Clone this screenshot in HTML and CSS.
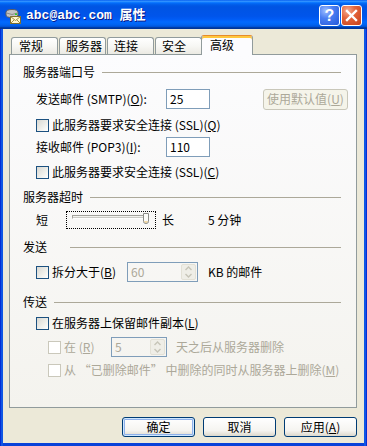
FILE: index.html
```html
<!DOCTYPE html>
<html lang="zh-CN">
<head>
<meta charset="utf-8">
<title>abc@abc.com 属性</title>
<link rel="stylesheet" href="styles.css">
</head>
<body>
<div class="window">
  <div class="titlebar">
    <svg class="app-icon" width="16" height="16" viewBox="0 0 16 16">
      <path d="M1 4.5 Q1 1.5 7 1.5 Q13 1.5 13 4.5 L13 7 Q13 9.5 7 9.5 Q1 9.5 1 7 Z" fill="#C4C4C4" stroke="#5E5E5E"/>
      <path d="M1.5 5 Q7 8 12.5 5" fill="none" stroke="#8A8A8A"/>
      <rect x="10" y="5.5" width="2" height="1.5" fill="#27D127"/>
      <rect x="5.5" y="8.5" width="10" height="7" fill="#FFF7CF" stroke="#7E6F2E"/>
      <path d="M5.5 8.5 L10.5 12.5 L15.5 8.5 M5.5 15.5 L9 12 M15.5 15.5 L12 12" fill="none" stroke="#9C8C45"/>
    </svg>
    <span class="title">abc@abc.com 属性</span>
    <div class="caption-btns">
      <div class="cap help">?</div>
      <div class="cap close">
        <svg width="19" height="19" viewBox="0 0 19 19"><path d="M5 5 L14 14 M14 5 L5 14" stroke="#fff" stroke-width="2.4" stroke-linecap="square"/></svg>
      </div>
    </div>
  </div>
  <div class="frame">
    <div class="client">
      <div class="tabs">
        <div class="tab first">常规</div>
        <div class="tab">服务器</div>
        <div class="tab">连接</div>
        <div class="tab">安全</div>
        <div class="tab active">高级</div>
      </div>
      <div class="panel">
        <div class="group-head top">
          <span>服务器端口号</span><i class="rule"></i>
        </div>
        <div class="row m7">
          <span class="field-label">发送邮件 (SMTP)(<u>O</u>):</span>
          <span class="edit">25</span>
          <span class="btn-disabled">使用默认值(<u>U</u>)</span>
        </div>
        <div class="row m6">
          <span class="check"></span><span>此服务器要求安全连接 (SSL)(<u>Q</u>)</span>
        </div>
        <div class="row m2">
          <span class="field-label">接收邮件 (POP3)(<u>I</u>):</span>
          <span class="edit">110</span>
        </div>
        <div class="row m5">
          <span class="check"></span><span>此服务器要求安全连接 (SSL)(<u>C</u>)</span>
        </div>

        <div class="group-head m5">
          <span>服务器超时</span><i class="rule"></i>
        </div>
        <div class="row m3">
          <span class="slider-label">短</span>
          <span class="slider">
            <svg width="88" height="16" viewBox="0 0 88 16">
              <rect x="5.5" y="3.5" width="75" height="2.5" fill="#F2F2EE" stroke="#A3A29C" stroke-width="1"/>
              <line x1="6" y1="6.5" x2="80" y2="6.5" stroke="#FFFFFF"/>
              <path d="M76.5 1.5 H81.5 V9.5 Q81.5 11.5 79 11.5 Q76.5 11.5 76.5 9.5 Z" fill="#FBFBF8" stroke="#8C8D88"/>
              <path d="M77.5 9.5 Q79 11 80.5 9.5" fill="none" stroke="#E8B85A"/>
            </svg>
          </span>
          <span class="slider-long">长</span>
          <span>5 分钟</span>
        </div>

        <div class="group-head m7">
          <span>发送</span><i class="rule wide"></i>
        </div>
        <div class="row m5">
          <span class="check-block split"><span class="check"></span><span>拆分大于(<u>B</u>)</span></span>
          <span class="spin w71">
            <span class="spin-val">60</span>
            <span class="spin-btns">
              <svg width="13" height="16" viewBox="0 0 13 16"><path d="M3.5 6 L6.5 3 L9.5 6 M3.5 10 L6.5 13 L9.5 10" fill="none" stroke="#C7C5B8" stroke-width="1.4"/></svg>
            </span>
          </span>
          <span class="after-spin">KB 的邮件</span>
        </div>

        <div class="group-head m10">
          <span>传送</span><i class="rule"></i>
        </div>
        <div class="row m1">
          <span class="check"></span><span>在服务器上保留邮件副本(<u>L</u>)</span>
        </div>
        <div class="row sub m4 disabled">
          <span class="check-block days"><span class="check off"></span><span>在 (<u>R</u>)</span></span>
          <span class="spin w56">
            <span class="spin-val">5</span>
            <span class="spin-btns">
              <svg width="13" height="16" viewBox="0 0 13 16"><path d="M3.5 6 L6.5 3 L9.5 6 M3.5 10 L6.5 13 L9.5 10" fill="none" stroke="#C7C5B8" stroke-width="1.4"/></svg>
            </span>
          </span>
          <span class="after-days">天之后从服务器删除</span>
        </div>
        <div class="row sub m3 disabled">
          <span class="check off"></span><span>从 “已删除邮件” 中删除的同时从服务器上删除(<u>M</u>)</span>
        </div>
      </div>
      <div class="actions">
        <button class="btn default">确定</button>
        <button class="btn">取消</button>
        <button class="btn">应用(<u>A</u>)</button>
      </div>
    </div>
  </div>
</div>
</body>
</html>
```

FILE: styles.css
```css
* { box-sizing: border-box; }

body {
  margin: 0;
  width: 367px;
  height: 446px;
  overflow: hidden;
  font-family: "Noto Sans CJK SC", "Noto Sans", sans-serif;
  font-size: 12px;
  line-height: 14px;
  color: #000;
  background: #0842D9;
}

.window {
  width: 367px;
  height: 446px;
  display: flex;
  flex-direction: column;
}

.titlebar {
  height: 29px;
  flex: none;
  display: flex;
  align-items: center;
  padding: 2px 5px 0 5px;
  background: linear-gradient(to bottom,
    #0058EE 0%, #3593FF 4%, #288EFF 6%, #127DFF 8%, #036FFC 10%,
    #0262EE 14%, #0057E5 20%, #0054E3 24%, #0055EB 56%, #005BF5 66%,
    #026AFE 76%, #0062EF 86%, #0052D6 92%, #0040AB 94%, #003092 100%);
}

.app-icon { flex: none; display: block; }

.title {
  margin-left: 5px;
  color: #fff;
  font-family: "Liberation Mono", "Noto Sans CJK SC", monospace;
  font-weight: bold;
  font-size: 13px;
  text-shadow: 1px 1px 0 #0A1883;
  white-space: pre;
}

.caption-btns {
  margin-left: auto;
  display: flex;
  gap: 1px;
}

.cap {
  width: 21px;
  height: 21px;
  border: 1px solid #fff;
  border-radius: 3px;
  display: flex;
  align-items: center;
  justify-content: center;
}

.help {
  background: radial-gradient(circle at 30% 25%, #9DBDFF 0%, #4A7EF2 40%, #2458DA 100%);
  color: #fff;
  font-family: "Liberation Sans", sans-serif;
  font-weight: bold;
  font-size: 16px;
}

.close {
  background: radial-gradient(circle at 30% 25%, #F4AB92 0%, #E4643A 40%, #C5401B 100%);
}
.close svg { display: block; }

.frame {
  flex: 1;
  padding: 0 3px 3px 3px;
  background: linear-gradient(to right, #0019CF 0, #0842D9 1px, #166AEE 2px, #0842D9 3px, #0842D9 calc(100% - 3px), #166AEE calc(100% - 2px), #0019CF 100%);
}

.client {
  height: 100%;
  background: #ECE9D8;
  padding: 6px 7px 0 6px;
  display: flex;
  flex-direction: column;
}

/* tabs */
.tabs {
  height: 20px;
  display: flex;
  align-items: flex-end;
  padding-left: 2px;
}

.tab {
  width: 47px;
  height: 17px;
  margin: 0 1px 1px 0;
  border: 1px solid #919B9C;
  border-bottom: none;
  border-radius: 3px 3px 0 0;
  background: linear-gradient(#FFFFFF, #F7F7F4 50%, #EBEAE3);
  padding: 1px 0 0 6px;
  white-space: nowrap;
}
.tab.first { padding-left: 7px; }

.tab.active {
  position: relative;
  z-index: 1;
  width: 52px;
  height: 20px;
  margin: 0 0 0 -2px;
  background: #FCFCFE;
  border-top: 1px solid #E68B2C;
  box-shadow: inset 0 2px 0 #FFC73C;
  padding: 2px 0 0 8px;
}

/* panel */
.panel {
  width: 348px;
  height: 354px;
  margin-top: -1px;
  border: 1px solid #919B9C;
  background: linear-gradient(#FCFCFE, #F4F3EE);
  padding: 7px 15px 0 13px;
  display: flex;
  flex-direction: column;
}

.group-head {
  height: 20px;
  display: flex;
  align-items: center;
  white-space: nowrap;
}
.rule {
  flex: 1;
  height: 1px;
  margin-left: 7px;
  background: #ACA899;
}
.rule.wide { margin-left: 23px; }

.row {
  height: 20px;
  margin-left: 13px;
  display: flex;
  align-items: center;
  white-space: nowrap;
}
.row.sub { margin-left: 25px; }
.row.disabled { color: #ACA899; }

.m1 { margin-top: 1px; }
.m2 { margin-top: 2px; }
.m3 { margin-top: 3px; }
.m4 { margin-top: 4px; }
.m5 { margin-top: 5px; }
.m6 { margin-top: 6px; }
.m7 { margin-top: 7px; }
.m10 { margin-top: 10px; }

.field-label { width: 130px; flex: none; }

.edit {
  width: 44px;
  height: 20px;
  flex: none;
  border: 1px solid #7F9DB9;
  background: #fff;
  padding-left: 3px;
  display: flex;
  align-items: center;
}

.btn-disabled {
  margin-left: 53px;
  width: 85px;
  height: 21px;
  flex: none;
  border: 1px solid #C9C7BA;
  border-radius: 3px;
  background: #F5F4EA;
  color: #ACA899;
  display: flex;
  align-items: center;
  justify-content: center;
}

.check {
  width: 13px;
  height: 13px;
  flex: none;
  margin-right: 3px;
  border: 1px solid #1C5180;
  background: linear-gradient(135deg, #D8D8D2, #F4F4F0 70%, #FFFFFF);
}
.check.off {
  border-color: #CAC8BB;
  background: #FFFFFF;
}

.check-block { display: flex; align-items: center; flex: none; }
.check-block.split { width: 91px; }
.check-block.days { width: 63px; }

.slider-label { width: 30px; flex: none; }
.slider {
  width: 90px;
  height: 18px;
  flex: none;
  border: 1px dotted #000;
}
.slider svg { display: block; }
.slider-long { width: 46px; margin-left: 6px; flex: none; }

.spin {
  height: 20px;
  flex: none;
  display: flex;
  border: 1px solid #7F9DB9;
}
.spin.w71 { width: 71px; }
.spin.w56 { width: 56px; }
.spin-val {
  flex: 1;
  padding-left: 3px;
  color: #ACA899;
  display: flex;
  align-items: center;
}
.spin-btns {
  width: 15px;
  margin: 1px;
  border: 1px solid #E3E1D6;
  border-radius: 2px;
  background: #EFEEE7;
  display: flex;
  align-items: center;
  justify-content: center;
}
.spin-btns svg { display: block; }

.after-spin { margin-left: 10px; }
.after-days { margin-left: 9px; }

/* buttons */
.actions {
  margin-top: 9px;
  display: flex;
  justify-content: flex-end;
  gap: 8px;
}

.btn {
  width: 73px;
  height: 20px;
  padding: 0;
  border: 1px solid #003C74;
  border-radius: 3px;
  background: linear-gradient(#FFFFFF, #F5F4F0 70%, #DCD8CC);
  font: inherit;
  color: #000;
  display: flex;
  align-items: center;
  justify-content: center;
}
.btn.default {
  box-shadow: inset 0 0 0 1px #CEE7FF, inset 0 0 0 2px #8FB1EA;
}
```
